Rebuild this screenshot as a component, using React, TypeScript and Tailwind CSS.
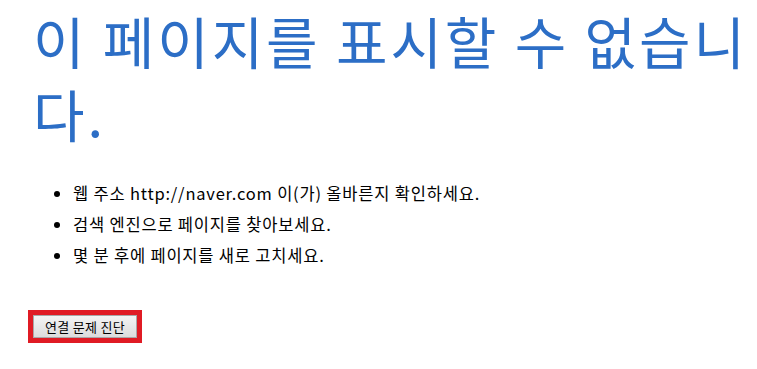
export default function App() {
  return (
    <div
      className="w-[757px] h-[369px] bg-white overflow-hidden"
      style={{ fontFamily: '"Noto Sans CJK KR", "Noto Sans", sans-serif' }}
    >
      <div className="pl-[33px] pt-[3px]">
        <h1 className="text-[56px] leading-[73px] text-[#2c6ec6] font-normal tracking-[2.9px]">
          이 페이지를 표시할 수 없습니다.
        </h1>
        <ul className="mt-[29px] ml-[26px] list-disc pl-[14px] text-[16.5px] leading-[31px] tracking-[0.8px] text-black">
          <li>웹 주소 http://naver.com 이(가) 올바른지 확인하세요.</li>
          <li>검색 엔진으로 페이지를 찾아보세요.</li>
          <li>몇 분 후에 페이지를 새로 고치세요.</li>
        </ul>
        <div className="mt-[39px] ml-[-5px] inline-block border-[5px] border-[#e01b24]">
          <button
            type="button"
            className="block h-[23px] px-[11px] text-[13px] leading-[20px] tracking-[0.3px] text-black bg-gradient-to-b from-[#f4f4f4] to-[#dcdcdc] border border-[#a8a8a8]"
          >
            연결 문제 진단
          </button>
        </div>
      </div>
    </div>
  );
}
